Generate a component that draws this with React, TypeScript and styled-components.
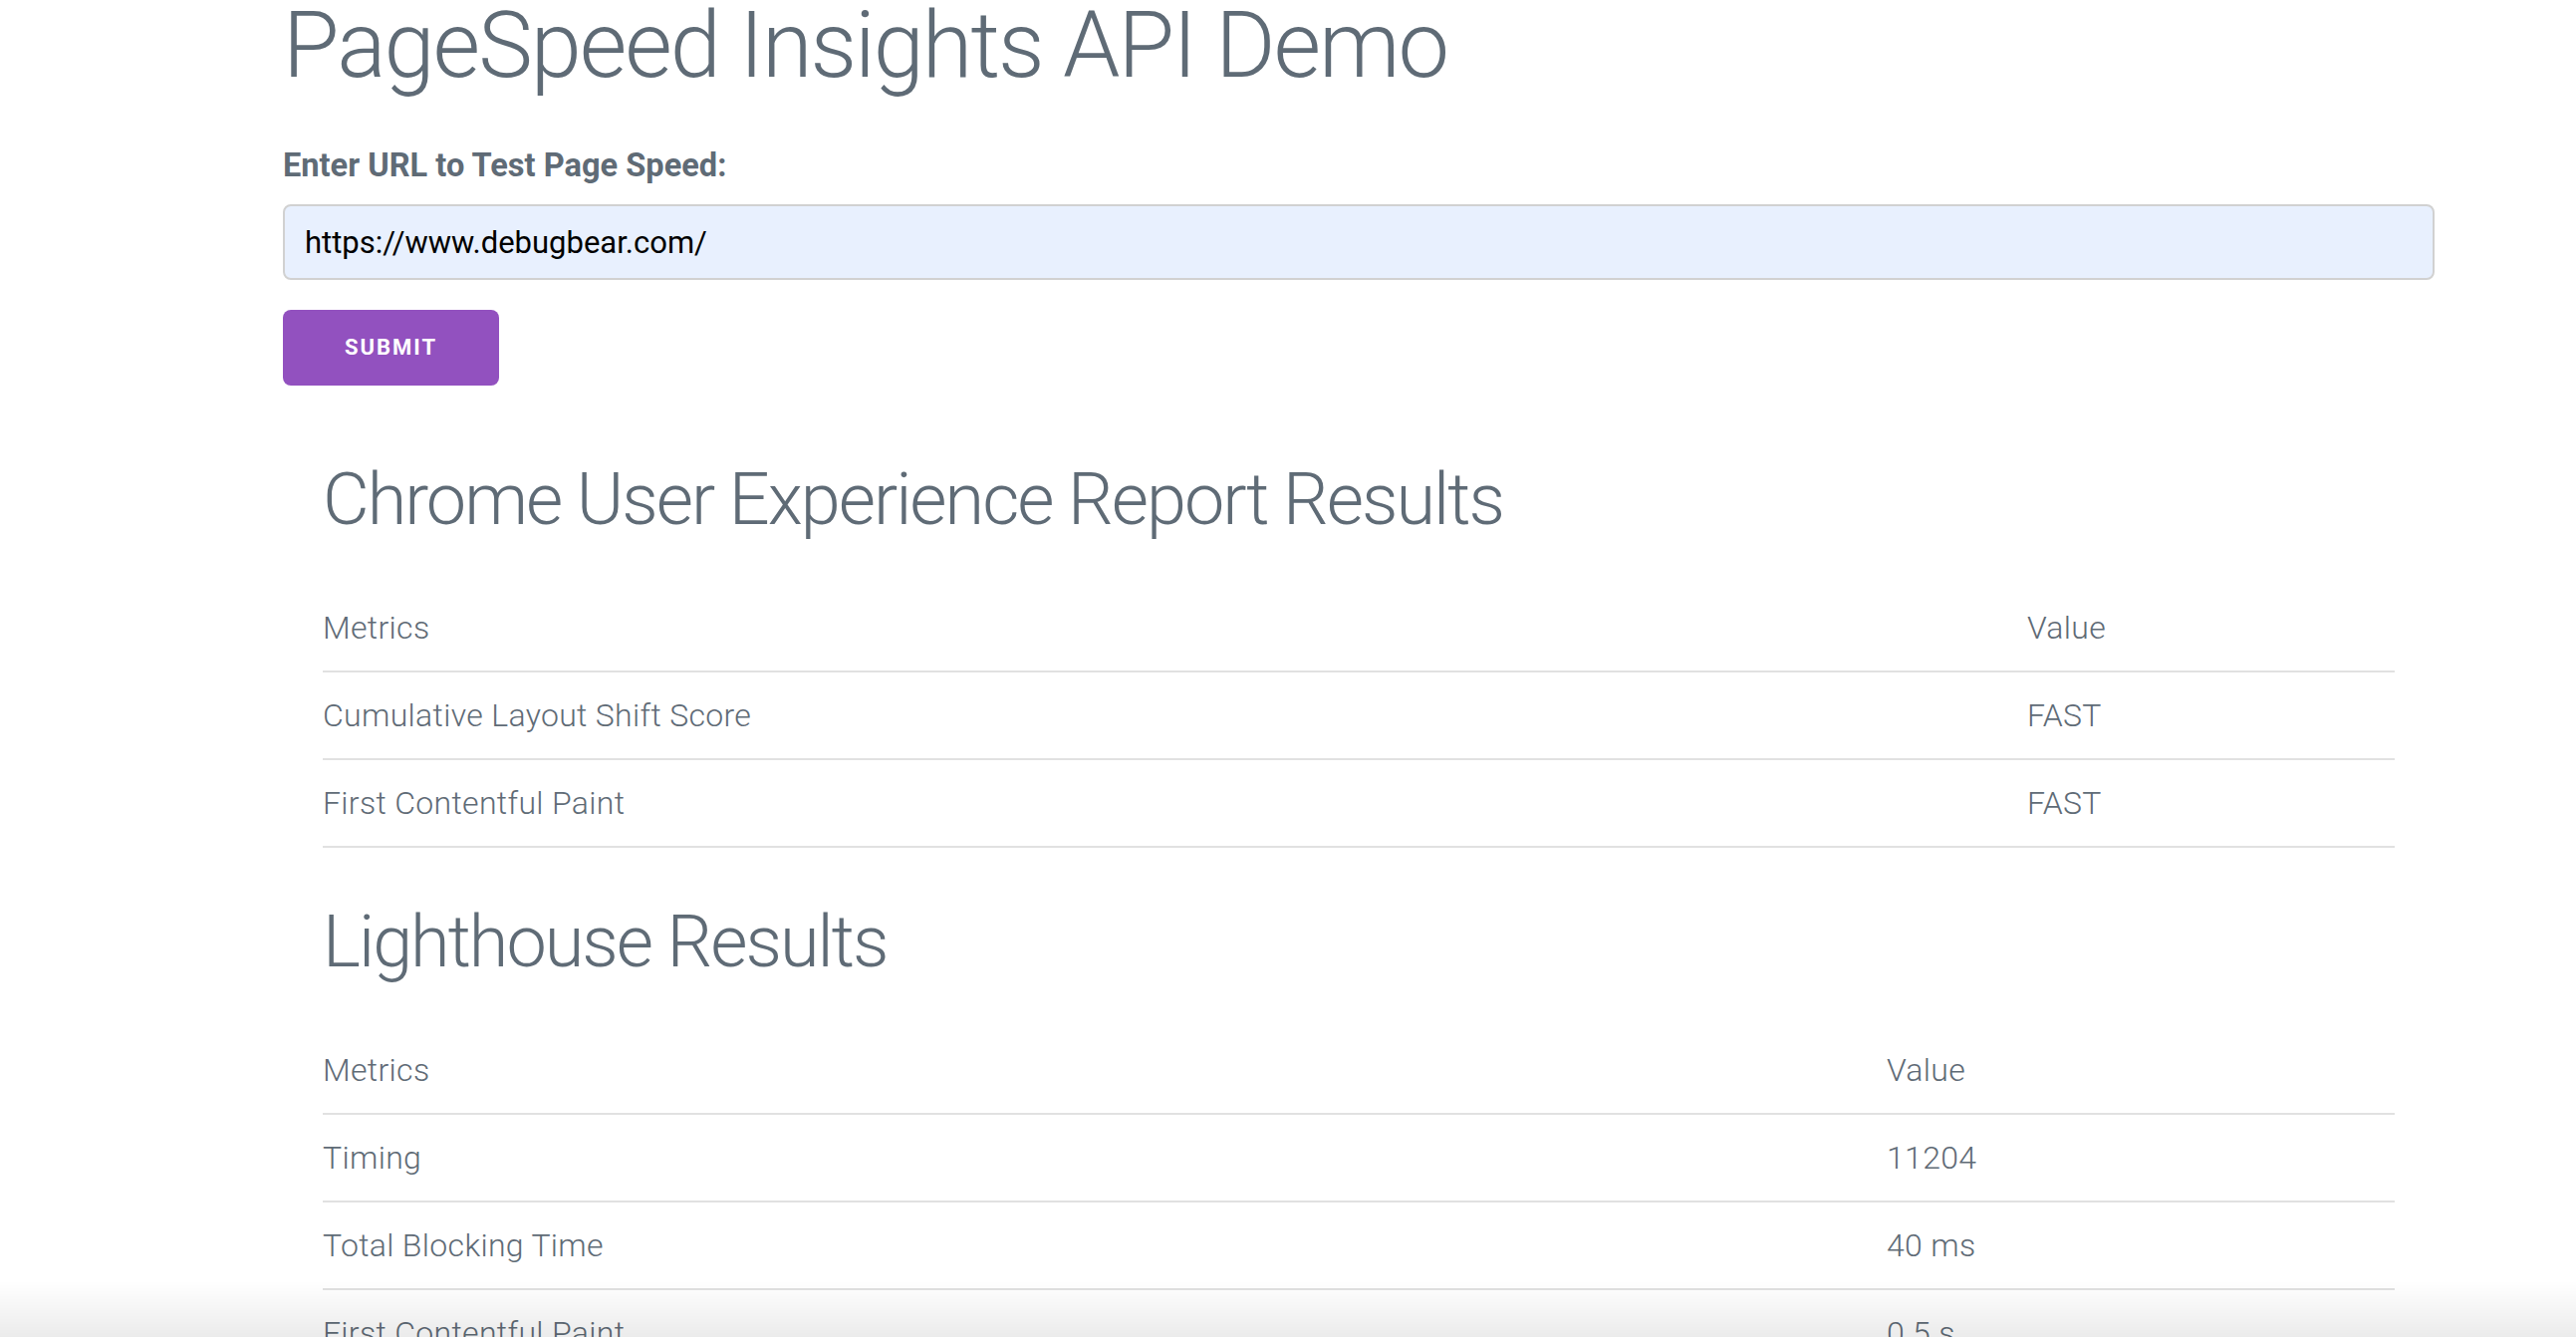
import React from "react";
import styled, { createGlobalStyle } from "styled-components";

const GlobalStyle = createGlobalStyle`
  html, body {
    margin: 0;
    padding: 0;
    background: #fff;
    overflow: hidden;
  }
  body {
    color: #5f6b76;
    font-family: Roboto, "Liberation Sans", sans-serif;
    font-weight: 300;
    font-size: 32px;
    letter-spacing: 0.01em;
    line-height: 1.6;
  }
  * {
    box-sizing: border-box;
  }
`;

const Page = styled.div`
  height: 100vh;
  overflow: hidden;
  position: relative;
`;

const Container = styled.main`
  width: 2160px;
  margin-left: 284px;
`;

const Title = styled.h1`
  margin: -9px 0 40px;
  font-size: 92px;
  font-weight: 300;
  line-height: 1.2;
  letter-spacing: -2px;
`;

const Form = styled.form`
  display: flex;
  flex-direction: column;
  align-items: flex-start;
`;

const Label = styled.label`
  display: block;
  font-size: 32.6px;
  font-weight: 700;
  letter-spacing: 0;
  line-height: 50px;
  margin-bottom: 14px;
`;

const UrlInput = styled.input`
  width: 100%;
  height: 76px;
  margin: 0 0 30px;
  padding: 0 20px;
  border: 2px solid #d1d1d1;
  border-radius: 8px;
  background: #e8f0fe;
  color: #000;
  font-family: Roboto, "Liberation Sans", sans-serif;
  font-size: 31px;
  font-weight: 400;
  letter-spacing: 0;
  outline: none;
`;

const SubmitButton = styled.button`
  height: 76px;
  padding: 0 62px;
  border: none;
  border-radius: 8px;
  background: #9251bf;
  color: #fff;
  font-family: Roboto, "Liberation Sans", sans-serif;
  font-size: 22px;
  font-weight: 700;
  letter-spacing: 2px;
  line-height: 76px;
  text-transform: uppercase;
  cursor: pointer;
`;

const Results = styled.section`
  padding: 70px 40px 0;
`;

const SectionTitle = styled.h2`
  margin: 0 0 40px;
  font-size: 72px;
  font-weight: 300;
  line-height: 1.25;
  letter-spacing: -2px;
`;

const Table = styled.table`
  width: 100%;
  border-collapse: collapse;
  border-spacing: 0;
  margin-bottom: 50px;
`;

const Cell = styled.td<{ $width?: number }>`
  text-align: left;
  font-weight: 300;
  line-height: 38px;
  padding: 24px 30px;
  border-bottom: 2px solid #e1e1e1;
  width: ${(p) => (p.$width ? `${p.$width}px` : "auto")};
  &:first-child {
    padding-left: 0;
  }
  &:last-child {
    padding-right: 0;
  }
`;

const HeadCell = styled(Cell).attrs({ as: "th" })``;

// soft grey fade over the bottom edge of the window
const BottomFade = styled.div`
  position: fixed;
  left: 0;
  right: 0;
  bottom: 0;
  height: 56px;
  pointer-events: none;
  background: linear-gradient(to bottom, rgba(0, 0, 0, 0), rgba(0, 0, 0, 0.08));
`;

type Row = [string, string];

const MetricsTable = ({ rows, labelWidth }: { rows: Row[]; labelWidth: number }) => (
  <Table>
    <thead>
      <tr>
        <HeadCell $width={labelWidth}>Metrics</HeadCell>
        <HeadCell>Value</HeadCell>
      </tr>
    </thead>
    <tbody>
      {rows.map(([name, value]) => (
        <tr key={name}>
          <Cell>{name}</Cell>
          <Cell>{value}</Cell>
        </tr>
      ))}
    </tbody>
  </Table>
);

const cruxRows: Row[] = [
  ["Cumulative Layout Shift Score", "FAST"],
  ["First Contentful Paint", "FAST"],
];

const lighthouseRows: Row[] = [
  ["Timing", "11204"],
  ["Total Blocking Time", "40 ms"],
  ["First Contentful Paint", "0.5 s"],
  ["Speed Index", "1.4 s"],
];

export default function App() {
  return (
    <Page>
      <GlobalStyle />
      <Container>
        <Title>PageSpeed Insights API Demo</Title>
        <Form onSubmit={(e) => e.preventDefault()}>
          <Label htmlFor="url">Enter URL to Test Page Speed:</Label>
          <UrlInput id="url" type="text" defaultValue="https://www.debugbear.com/" />
          <SubmitButton type="submit">Submit</SubmitButton>
        </Form>
        <Results>
          <SectionTitle>Chrome User Experience Report Results</SectionTitle>
          <MetricsTable rows={cruxRows} labelWidth={1681} />
          <SectionTitle>Lighthouse Results</SectionTitle>
          <MetricsTable rows={lighthouseRows} labelWidth={1540} />
        </Results>
      </Container>
      <BottomFade />
    </Page>
  );
}
